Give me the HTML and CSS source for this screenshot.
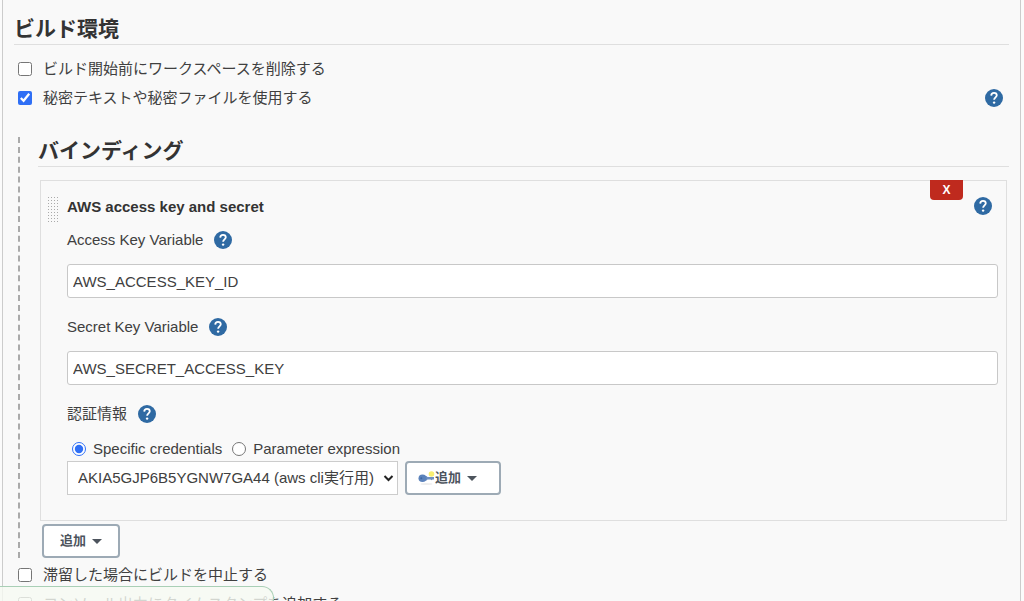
FILE: index.html
```html
<!DOCTYPE html>
<html lang="ja">
<head>
    <meta charset="UTF-8">
    <meta name="viewport" content="width=device-width, initial-scale=1.0">
    <title>ビルド環境</title>
    <link rel="stylesheet" href="styles.css">
</head>
<body>

    <!-- Help icon, reused by every help link -->
    <svg class="defs" aria-hidden="true">
        <symbol id="help" viewBox="0 0 18 18">
            <circle cx="9" cy="9" r="9" fill="#2f6aa3"/>
            <path d="M6.2 6.6C6.3 4.8 7.4 3.8 9 3.8s2.8 1 2.8 2.5c0 1.900-2.700 2.300-2.700 4.500" fill="none" stroke="#fff" stroke-width="1.800"/>
            <circle cx="9.100" cy="13.600" r="1.200" fill="#fff"/>
        </symbol>
    </svg>

    <form class="config">
        <h2 class="section-header">ビルド環境</h2>

        <div class="option">
            <input type="checkbox" id="clean">
            <label for="clean">ビルド開始前にワークスペースを削除する</label>
        </div>
        <div class="option">
            <input type="checkbox" id="secrets" checked>
            <label for="secrets">秘密テキストや秘密ファイルを使用する</label>
            <a class="help option-help" href="#" aria-label="Help"><svg><use href="#help"/></svg></a>
        </div>

        <!-- Bindings -->
        <div class="nested">
            <h2 class="section-header">バインディング</h2>

            <div class="binding">
                <button type="button" class="delete-btn">X</button>
                <a class="help binding-help" href="#" aria-label="Help"><svg><use href="#help"/></svg></a>
                <div class="drag-handle"></div>

                <div class="binding-title">AWS access key and secret</div>

                <div class="field-label">
                    <label for="access-key">Access Key Variable</label>
                    <a class="help" href="#" aria-label="Help"><svg><use href="#help"/></svg></a>
                </div>
                <input type="text" class="text-input" id="access-key" value="AWS_ACCESS_KEY_ID">

                <div class="field-label">
                    <label for="secret-key">Secret Key Variable</label>
                    <a class="help" href="#" aria-label="Help"><svg><use href="#help"/></svg></a>
                </div>
                <input type="text" class="text-input" id="secret-key" value="AWS_SECRET_ACCESS_KEY">

                <div class="field-label">
                    <label for="credentials">認証情報</label>
                    <a class="help" href="#" aria-label="Help"><svg><use href="#help"/></svg></a>
                </div>
                <div class="radios">
                    <input type="radio" name="cred" id="specific" checked>
                    <label for="specific">Specific credentials</label>
                    <input type="radio" name="cred" id="expression">
                    <label for="expression">Parameter expression</label>
                </div>
                <div class="credentials">
                    <div class="select-wrap">
                        <select id="credentials">
                            <option>AKIA5GJP6B5YGNW7GA44 (aws cli実行用)</option>
                        </select>
                        <svg class="chevron" viewBox="0 0 10 7"><path d="M1 1l4 4 4-4" fill="none" stroke="#222" stroke-width="2"/></svg>
                    </div>
                    <button type="button" class="menu-btn key-btn">
                        <svg class="key" viewBox="0 0 16 16">
                            <ellipse cx="8" cy="14" rx="6" ry="1" fill="#eee"/>
                            <circle cx="13" cy="4" r="2.800" fill="#f8ee72"/>
                            <path d="M5 6h3l1 1h6.500v2.500H14l-1 .8-1-.8H9L8 10.500H5z" fill="#6f90c2"/>
                            <ellipse cx="4" cy="8.200" rx="4" ry="3.800" fill="#5b82bb"/>
                            <circle cx="2.800" cy="8.200" r="1" fill="#3d66a3"/>
                        </svg>
                        追加
                        <span class="caret"></span>
                    </button>
                </div>
            </div>

            <button type="button" class="menu-btn add-btn">追加 <span class="caret"></span></button>
        </div>

        <div class="option">
            <input type="checkbox" id="abort">
            <label for="abort">滞留した場合にビルドを中止する</label>
        </div>
        <div class="option">
            <input type="checkbox" id="timestamps">
            <label for="timestamps">コンソール出力にタイムスタンプを追加する</label>
        </div>
    </form>

    <!-- Notification in the bottom left corner -->
    <div class="notice"></div>

</body>
</html>
```

FILE: styles.css
```css
* {
    box-sizing: border-box;
}
body {
    margin: 0;
    height: 100vh;
    overflow: hidden;
    background-color: #fbfbfb;
    color: #404040;
    font-family: "Liberation Sans", "Noto Sans CJK JP", sans-serif;
    font-size: 15px;
    line-height: 20px;
}
input, select, button {
    margin: 0;
    color: inherit;
    font: inherit;
    accent-color: #2f6ff5;
}
.defs {
    position: absolute;
    width: 0;
    height: 0;
}
.config {
    min-height: 100vh;
    margin: 0 3px 0 2px;
    padding: 12px 11px 0;
    border-left: 1px solid #ccc;
    border-right: 1px solid #ccc;
    background-color: #f9f9f9;
}
.section-header {
    height: 33px;
    margin: 0 0 9px;
    border-bottom: 1px solid #dfdfdf;
    color: #333;
    font-size: 21px;
    line-height: 33px;
}

/* Checkbox rows */
.option {
    display: flex;
    align-items: center;
    height: 29px;
    padding: 0 6px 0 4px;
}
.option input {
    width: 14px;
    height: 14px;
    margin-right: 11px;
}
.option-help {
    margin-left: auto;
}
.help, .help svg {
    display: block;
    width: 18px;
    height: 18px;
}

/* Nested block with dashed line */
.nested {
    margin: 25px 0 2px 4px;
    padding-left: 18px;
    border-left: 2px dashed #aaa;
}
.nested .section-header {
    height: 30px;
    margin-bottom: 13px;
    line-height: 27px;
}
.binding {
    position: relative;
    margin: 0 2px;
    padding: 16px 8px 25px 26px;
    border: 1px solid #dfdfdf;
}
.delete-btn {
    position: absolute;
    top: -1px;
    right: 43px;
    width: 33px;
    height: 20px;
    padding: 0;
    border: 0;
    border-radius: 0 0 4px 4px;
    background-color: #bf2a1e;
    color: white;
    font-size: 12px;
    font-weight: bold;
    line-height: 20px;
}
.binding-help {
    position: absolute;
    top: 16px;
    right: 14px;
}
.drag-handle {
    position: absolute;
    top: 15px;
    left: 6px;
    width: 12px;
    height: 27px;
    background: radial-gradient(circle, #aaa 1px, transparent 1px) 0 0 / 3px 3px;
}
.binding-title {
    margin-bottom: 13px;
    color: #333;
    font-weight: bold;
}
.field-label {
    display: flex;
    align-items: center;
    gap: 11px;
    height: 20px;
    margin-bottom: 14px;
}
.text-input {
    display: block;
    width: 100%;
    height: 34px;
    margin-bottom: 19px;
    padding: 0 5px;
    border: 1px solid #c8c8c8;
    border-radius: 3px;
    background-color: white;
}
.radios {
    display: flex;
    align-items: center;
    height: 20px;
    margin: 15px 0 2px 5px;
}
.radios input {
    width: 14px;
    height: 14px;
    margin-right: 7px;
}
.radios label {
    margin-right: 10px;
}
.credentials {
    display: flex;
    gap: 7px;
}
.select-wrap {
    position: relative;
}
.select-wrap select {
    width: 331px;
    height: 34px;
    padding: 0 10px;
    border: 1px solid #ccc;
    border-radius: 0;
    background-color: white;
    appearance: none;
}
.chevron {
    position: absolute;
    top: 14px;
    right: 4px;
    width: 11px;
    height: 7px;
    pointer-events: none;
}
.menu-btn {
    display: flex;
    align-items: center;
    height: 34px;
    padding: 0 16px;
    border: 2px solid #9daab5;
    border-radius: 4px;
    background-color: white;
    color: #4d545d;
    font-size: 13px;
    font-weight: bold;
    white-space: nowrap;
}
.key-btn {
    padding: 0 22px 0 11px;
}
.key {
    width: 17px;
    height: 16px;
}
.caret {
    margin-left: 6px;
    border: 5px solid transparent;
    border-top-color: #4d545d;
    border-bottom: 0;
}
.add-btn {
    margin: 3px 0 0 4px;
}
.notice {
    position: fixed;
    bottom: 0;
    left: 0;
    width: 274px;
    height: 15px;
    border: 1px solid #a9cfb6;
    border-bottom: 0;
    border-left: 0;
    border-radius: 0 12px 0 0;
    background-color: rgba(246, 250, 242, 0.800);
}
```
